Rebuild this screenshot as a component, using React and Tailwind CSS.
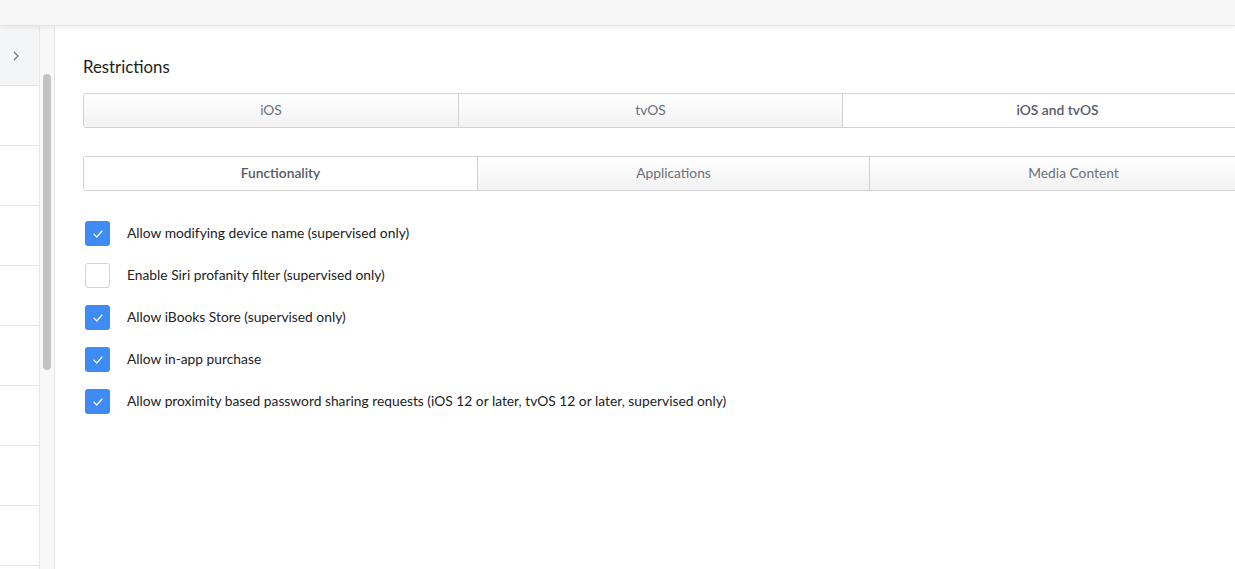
import React from "react";

const font = { fontFamily: '"Lato", "Open Sans", "Liberation Sans", sans-serif' };

function Check({ on }) {
  if (!on) {
    return <div className="w-[25px] h-[25px] rounded-[3px] border border-[#d3d3d3] bg-white shrink-0" />;
  }
  return (
    <div className="w-[25px] h-[25px] rounded-[3px] bg-[#3e8bf6] shrink-0 flex items-center justify-center">
      <svg width="10" height="8" viewBox="0 0 10 8" fill="none">
        <path d="M1 4.2 L3.8 7 L9 1" stroke="white" strokeWidth="1.2" strokeLinecap="round" strokeLinejoin="round" />
      </svg>
    </div>
  );
}

function Seg({ items }) {
  return (
    <div className="flex h-[35px] w-[1200px] rounded-[3px] border border-[#d2d2d2] overflow-hidden">
      {items.map((it, i) => (
        <div
          key={i}
          style={{ width: it.w }}
          className={
            "flex items-center justify-center text-[13.8px] shrink-0 " +
            (i > 0 ? "border-l border-[#d2d2d2] " : "") +
            (it.sel
              ? "bg-white text-[#555b68] font-semibold"
              : "bg-gradient-to-b from-white to-[#f2f2f2] text-[#6c707a]")
          }
        >
          {it.label}
        </div>
      ))}
    </div>
  );
}

const rows = [
  { on: true, t: "Allow modifying device name (supervised only)" },
  { on: false, t: "Enable Siri profanity filter (supervised only)" },
  { on: true, t: "Allow iBooks Store (supervised only)" },
  { on: true, t: "Allow in-app purchase" },
  { on: true, t: "Allow proximity based password sharing requests (iOS 12 or later, tvOS 12 or later, supervised only)" },
];

export default function App() {
  return (
    <div style={font} className="w-[1235px] h-[569px] overflow-hidden bg-white flex flex-col">
      <div className="h-[26px] shrink-0 bg-[#f6f6f6] border-b border-[#e4e4e4] shadow-[0_2px_4px_rgba(0,0,0,0.06)] relative z-10" />
      <div className="flex flex-1 min-h-0">
        <div className="w-[39px] shrink-0 flex flex-col">
          <div className="h-[60px] bg-[#f4f5f7] border-b border-[#e6e6e6] flex items-center pl-[13px] text-[#6a6a6a]">
            <svg width="6" height="10" viewBox="0 0 6 10" fill="none">
              <path d="M1 1 L5 5 L1 9" stroke="#707070" strokeWidth="1.1" />
            </svg>
          </div>
          {Array.from({ length: 8 }).map((_, i) => (
            <div key={i} className="h-[60px] shrink-0 border-b border-[#e6e6e6]" />
          ))}
        </div>
        <div className="w-[16px] shrink-0 bg-[#f8f8f8] border-l border-r border-[#e8e8e8] pt-[48px] flex justify-center">
          <div className="w-[8px] h-[296px] rounded-full bg-[#c2c2c2]" />
        </div>
        <div className="flex-1 pl-[28px] pt-[31px]">
          <div className="text-[16.8px] text-[#222] leading-[20px]">Restrictions</div>
          <div className="mt-[16px]">
            <Seg
              items={[
                { label: "iOS", w: 374 },
                { label: "tvOS", w: 384 },
                { label: "iOS and tvOS", w: 430, sel: true },
              ]}
            />
          </div>
          <div className="mt-[28px]">
            <Seg
              items={[
                { label: "Functionality", w: 393, sel: true },
                { label: "Applications", w: 392 },
                { label: "Media Content", w: 408 },
              ]}
            />
          </div>
          <div className="mt-[30px] flex flex-col gap-[17px] pl-[2px]">
            {rows.map((r, i) => (
              <div key={i} className="flex items-center gap-[17px] h-[25px]">
                <Check on={r.on} />
                <span className="text-[13.8px] text-[#222]">{r.t}</span>
              </div>
            ))}
          </div>
        </div>
      </div>
    </div>
  );
}
